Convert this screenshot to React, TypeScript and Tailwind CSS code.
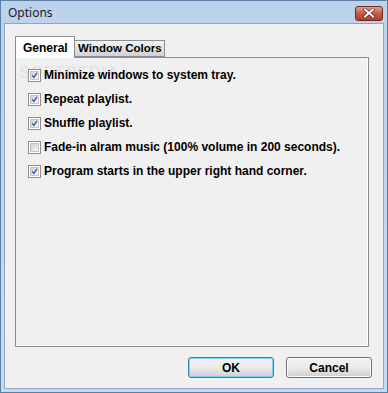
import React from "react";

const font = { fontFamily: "Tahoma, 'Liberation Sans', Arial, sans-serif" };

const items = [
  { label: "Minimize windows to system tray.", checked: true },
  { label: "Repeat playlist.", checked: true },
  { label: "Shuffle playlist.", checked: true },
  { label: "Fade-in alram music (100% volume in 200 seconds).", checked: false },
  { label: "Program starts in the upper right hand corner.", checked: true },
];

function Checkbox({ checked }: { checked: boolean }) {
  return (
    <div className="w-[13px] h-[13px] border border-[#8e8f8f] bg-white p-[1px] shrink-0">
      <div className="w-full h-full bg-gradient-to-br from-[#cbcfd5] to-[#f6f6f6] border border-[#c4c4c4] flex items-center justify-center">
        {checked && (
          <svg width="9" height="9" viewBox="0 0 9 9">
            <path d="M1.5 4.5 L3.7 7 L7.7 1.2" fill="none" stroke="#3d55a8" strokeWidth="1.6" />
          </svg>
        )}
      </div>
    </div>
  );
}

function Button({ label, primary }: { label: string; primary?: boolean }) {
  return (
    <div
      className={
        "w-[86px] h-[21px] rounded-[3px] border flex items-center justify-center text-[12px] font-bold text-black bg-gradient-to-b from-[#f2f2f2] via-[#ebebeb] to-[#cfcfcf] " +
        (primary ? "border-[#3c7fb1] shadow-[inset_0_0_0_1px_#7ad1f5]" : "border-[#707070] shadow-[inset_0_0_0_1px_#fcfcfc]")
      }
    >
      {label}
    </div>
  );
}

export default function App() {
  return (
    <div className="w-[388px] h-[393px] flex flex-col bg-gradient-to-b from-[#bcd1ea] to-[#c6daf0] border border-[#5e7fa6]" style={font}>
      {/* title bar */}
      <div className="h-[22px] flex items-center justify-between pl-[7px] pr-[4px]">
        <span className="text-[12px] text-[#1a1a1a] pt-[2px]" style={{ fontFamily: "'Noto Sans', 'Liberation Sans', sans-serif" }}>
          Options
        </span>
        <div className="w-[28px] h-[15px] mt-[2px] rounded-[3px] border border-[#6b2a20] bg-gradient-to-b from-[#e0a291] via-[#c65a43] to-[#b83c24] flex items-center justify-center">
          <svg width="12" height="10" viewBox="0 0 12 10">
            <path d="M2 1.5 L10 8.5 M10 1.5 L2 8.5" stroke="#5a1d14" strokeWidth="3.4" strokeLinecap="square" />
            <path d="M2 1.5 L10 8.5 M10 1.5 L2 8.5" stroke="#ffffff" strokeWidth="2" strokeLinecap="square" />
          </svg>
        </div>
      </div>

      {/* client area */}
      <div className="flex-1 mx-[3px] mb-[3px] bg-[#f0f0f0] border border-[#8fa7c4] flex flex-col pl-[10px] pr-[14px] pt-[11px]">
        {/* tabs */}
        <div className="flex items-end h-[22px] relative z-10">
          <div className="w-[60px] h-[22px] -mb-[1px] bg-white border border-b-0 border-[#898c95] flex items-center pl-[7px] text-[12px] font-bold text-black">
            General
          </div>
          <div className="w-[90px] h-[17px] border border-l-0 border-[#898c95] bg-gradient-to-b from-[#f3f3f3] to-[#d2d2d2] flex items-center pl-[3px] text-[11.5px] font-bold text-black">
            Window Colors
          </div>
        </div>

        {/* tab panel */}
        <div className="h-[290px] border border-[#898c95] shadow-[inset_-1px_-1px_0_#ffffff] bg-[#f0f0f0] relative pt-[5px] pl-[12px]">
          <div className="absolute left-[3px] top-[3px] text-[16px] font-bold tracking-[1px] text-[#e4e4e4] select-none">
            SOFTPEDIA<span className="text-[7px] align-top">™</span>
          </div>
          <div className="relative flex flex-col">
            {items.map((it) => (
              <div key={it.label} className="h-[24px] flex items-center gap-[3px]">
                <Checkbox checked={it.checked} />
                <span className="text-[12px] font-bold text-black whitespace-nowrap">{it.label}</span>
              </div>
            ))}
          </div>
        </div>

        {/* buttons */}
        <div className="flex justify-end gap-[12px] mt-[10px] -mr-[3px]">
          <Button label="OK" primary />
          <Button label="Cancel" />
        </div>
      </div>
    </div>
  );
}
